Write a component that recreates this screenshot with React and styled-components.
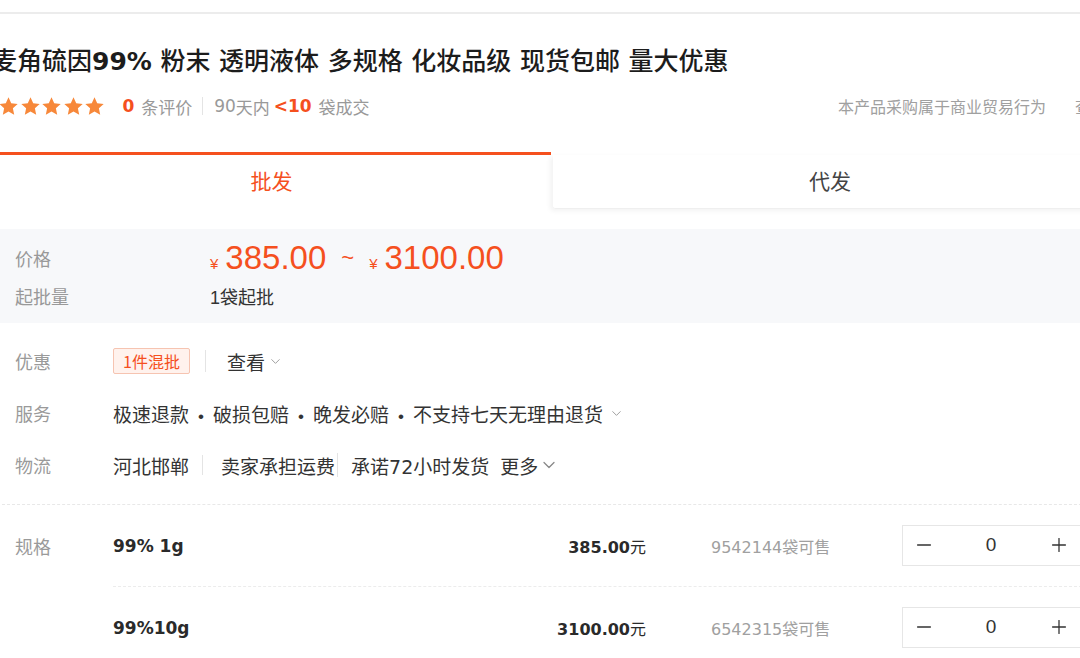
import React from "react";
import styled, { createGlobalStyle } from "styled-components";
import { ChevronDown, Minus, Plus } from "lucide-react";

const GlobalStyle = createGlobalStyle`
  body {
    margin: 0;
    background: #fff;
    overflow: hidden;
    font-family: "Noto Sans CJK SC", sans-serif;
  }
`;

const RED = "#f5501e";
const CJK = `"Noto Sans CJK SC", sans-serif`;
const NUM = `"DejaVu Sans", "Noto Sans CJK SC", sans-serif`;
const ARIAL = `"Liberation Sans", "Noto Sans CJK SC", sans-serif`;

const Page = styled.div`
  width: 1115px;
  margin-left: -8px;
  color: #333;
`;

const TopLine = styled.div`
  height: 12px;
  border-bottom: 2px solid #ececec;
`;

const Title = styled.h1`
  margin: 27px 0 0;
  font-family: ${CJK};
  font-size: 25px;
  font-weight: 500;
  line-height: 36px;
  word-spacing: 3px;
  color: #1c1c1c;
  white-space: nowrap;
`;

const BoldNum = styled.span`
  font-family: ${NUM};
  font-weight: bold;
`;

const RatingRow = styled.div`
  display: flex;
  align-items: center;
  height: 24px;
  margin-top: 14px;
  padding-left: 6px;
  font-size: 17px;
  color: #999;
  white-space: nowrap;
`;

const Stars = styled.div`
  display: flex;
  gap: 0.6px;
  margin-right: 17px;
`;

const Hot = styled.span`
  font-family: ${NUM};
  font-weight: bold;
  color: ${RED};
  font-size: 17px;
  margin-right: 7px;
`;

const Digits = styled.span`
  font-family: ${NUM};
  font-size: ${(p) => p.$size || 16}px;
`;

const Sep = styled.span`
  display: inline-block;
  width: 1px;
  height: ${(p) => p.$h || 18}px;
  background: #e4e4e4;
  margin: 0 ${(p) => p.$r ?? 10}px 0 ${(p) => p.$l ?? 10}px;
`;

const Note = styled.div`
  margin-left: auto;
  display: flex;
  gap: 29px;
  font-size: 16px;
  color: #a0a0a0;
`;

const Tabs = styled.div`
  display: flex;
  gap: 2px;
  height: 58px;
  margin-top: 34px;
`;

const Tab = styled.div`
  display: flex;
  align-items: center;
  justify-content: center;
  font-size: 21px;
  ${(p) =>
    p.$active
      ? `
    width: 559px;
    border-top: 3px solid ${RED};
    color: ${RED};
    padding-bottom: 5px;
  `
      : `
    flex: 1;
    margin-top: 3px;
    height: 54px;
    padding-bottom: 3px;
    box-sizing: border-box;
    color: #444;
    box-shadow: -3px 2px 5px rgba(0, 0, 0, 0.05);
    border-bottom: 1px solid #efefef;
    border-radius: 0 0 0 3px;
  `}
`;

const PriceBlock = styled.div`
  margin-top: 19px;
  background: #f7f8fa;
  padding: 11px 23px 13px;
  display: flex;
  flex-direction: column;
  gap: 6px;
`;

const PriceRow = styled.div`
  display: flex;
  align-items: center;
  height: ${(p) => p.$h}px;
`;

const PriceLabel = styled.div`
  width: 195px;
  font-size: 18px;
  color: #999;
`;

const Yen = styled.span`
  font-family: ${ARIAL};
  font-size: 15px;
  color: ${RED};
  margin-right: 7px;
  align-self: flex-end;
  margin-bottom: 4px;
`;

const BigPrice = styled.span`
  font-family: ${ARIAL};
  font-size: 33px;
  color: ${RED};
`;

const Tilde = styled.span`
  font-family: ${ARIAL};
  font-size: 22px;
  color: ${RED};
  margin: 0 15px 0 15px;
`;

const MinQty = styled.span`
  font-size: 18px;
  color: #333;
  font-family: ${ARIAL};
`;

const InfoList = styled.div`
  padding: 12px 0 13px 23px;
  border-bottom: 1px dashed #e8e8e8;
`;

const InfoRow = styled.div`
  display: flex;
  align-items: center;
  height: 52px;
  font-size: 19px;
  white-space: nowrap;
`;

const Label = styled.div`
  width: 98px;
  flex-shrink: 0;
  font-size: 18px;
  color: #9a9a9a;
  align-self: ${(p) => (p.$top ? "flex-start" : "center")};
  line-height: ${(p) => (p.$top ? "82px" : "normal")};
`;

const Tag = styled.span`
  display: inline-flex;
  align-items: center;
  height: 26px;
  padding: 0 9px;
  border: 1px solid #f6c4b1;
  background: #fff2ed;
  border-radius: 2px;
  color: ${RED};
  font-size: 16px;
  box-sizing: border-box;
`;

const Link = styled.span`
  display: inline-flex;
  align-items: center;
  gap: ${(p) => p.$gap ?? 3}px;
  color: #333;
`;

const Dot = styled.span`
  display: inline-block;
  width: 24px;
  text-align: center;
  font-family: ${ARIAL};
  font-size: 17px;
`;

const SpecSection = styled.div`
  display: flex;
  padding-left: 23px;
`;

const SpecRows = styled.div`
  flex: 1;
`;

const SpecRow = styled.div`
  display: flex;
  align-items: center;
  height: 82px;
  border-bottom: 1px dashed #ececec;
  box-sizing: border-box;
`;

const SpecName = styled.div`
  width: 400px;
  font-family: ${NUM};
  font-weight: bold;
  font-size: 17px;
  color: #2a2a2a;
`;

const SpecPrice = styled.div`
  width: 133px;
  text-align: right;
  font-family: ${NUM};
  font-weight: bold;
  font-size: 16px;
  color: #2a2a2a;
  span {
    font-family: ${CJK};
    font-weight: normal;
  }
`;

const Stock = styled.div`
  width: 191px;
  margin-left: 65px;
  font-size: 16px;
  color: #a0a0a0;
`;

const Stepper = styled.div`
  display: flex;
  align-items: center;
  height: 41px;
  width: 180px;
  border: 1px solid #e6e6e6;
  box-sizing: border-box;
  margin-top: -1px;
`;

const StepBtn = styled.div`
  width: ${(p) => p.$w}px;
  display: flex;
  justify-content: center;
  color: #333;
`;

const Qty = styled.div`
  flex: 1;
  text-align: center;
  font-family: ${ARIAL};
  font-size: 19px;
  color: #333;
`;

const Star = () => (
  <svg width="21" height="21" viewBox="0 0 24 24">
    <polygon
      points="12,1.5 15.1,8.3 22.5,9.1 17,14.1 18.5,21.5 12,17.8 5.5,21.5 7,14.1 1.5,9.1 8.9,8.3"
      fill="#f7883a"
    />
  </svg>
);

const specs = [
  { name: "99% 1g", price: "385.00", stock: "9542144" },
  { name: "99%10g", price: "3100.00", stock: "6542315" },
];

export default function App() {
  return (
    <Page>
      <GlobalStyle />
      <TopLine />
      <Title>
        麦角硫因<BoldNum>99%</BoldNum> 粉末 透明液体 多规格 化妆品级 现货包邮 量大优惠
      </Title>
      <RatingRow>
        <Stars>
          {[0, 1, 2, 3, 4].map((i) => (
            <Star key={i} />
          ))}
        </Stars>
        <Hot>0</Hot>条评价
        <Sep $h={18} $l={10} $r={11} />
        <Digits $size={17}>90</Digits>天内&nbsp;
        <Hot>&lt;10</Hot>袋成交
        <Note>
          <span>本产品采购属于商业贸易行为</span>
          <span>查看</span>
        </Note>
      </RatingRow>

      <Tabs>
        <Tab $active>批发</Tab>
        <Tab>代发</Tab>
      </Tabs>

      <PriceBlock>
        <PriceRow $h={36}>
          <PriceLabel>价格</PriceLabel>
          <Yen>¥</Yen>
          <BigPrice>385.00</BigPrice>
          <Tilde>~</Tilde>
          <Yen>¥</Yen>
          <BigPrice>3100.00</BigPrice>
        </PriceRow>
        <PriceRow $h={28}>
          <PriceLabel>起批量</PriceLabel>
          <MinQty>1袋起批</MinQty>
        </PriceRow>
      </PriceBlock>

      <InfoList>
        <InfoRow>
          <Label>优惠</Label>
          <Tag>1件混批</Tag>
          <Sep $h={22} $l={15} $r={21} />
          <Link>
            查看
            <ChevronDown size={15} color="#999" strokeWidth={1.5} />
          </Link>
        </InfoRow>
        <InfoRow>
          <Label>服务</Label>
          <Link $gap={6}>
            <span>
              极速退款<Dot>•</Dot>破损包赔<Dot>•</Dot>晚发必赔<Dot>•</Dot>不支持七天无理由退货
            </span>
            <ChevronDown size={15} color="#999" strokeWidth={1.5} />
          </Link>
        </InfoRow>
        <InfoRow>
          <Label>物流</Label>
          <span>河北邯郸</span>
          <Sep $h={20} $l={13} $r={18} />
          <span>卖家承担运费</span>
          <Sep $h={24} $l={2} $r={13} />
          <span>
            承诺<Digits $size={19}>72</Digits>小时发货
          </span>
          <Link $gap={1} style={{ marginLeft: 11 }}>
            更多
            <ChevronDown size={20} color="#888" strokeWidth={1.5} />
          </Link>
        </InfoRow>
      </InfoList>

      <SpecSection>
        <Label $top>规格</Label>
        <SpecRows>
          {specs.map((s) => (
            <SpecRow key={s.name}>
              <SpecName>{s.name}</SpecName>
              <SpecPrice>
                {s.price}
                <span>元</span>
              </SpecPrice>
              <Stock>
                <Digits>{s.stock}</Digits>袋可售
              </Stock>
              <Stepper>
                <StepBtn $w={42}>
                  <Minus size={22} strokeWidth={1.4} />
                </StepBtn>
                <Qty>0</Qty>
                <StepBtn $w={44}>
                  <Plus size={22} strokeWidth={1.4} />
                </StepBtn>
              </Stepper>
            </SpecRow>
          ))}
        </SpecRows>
      </SpecSection>
    </Page>
  );
}
